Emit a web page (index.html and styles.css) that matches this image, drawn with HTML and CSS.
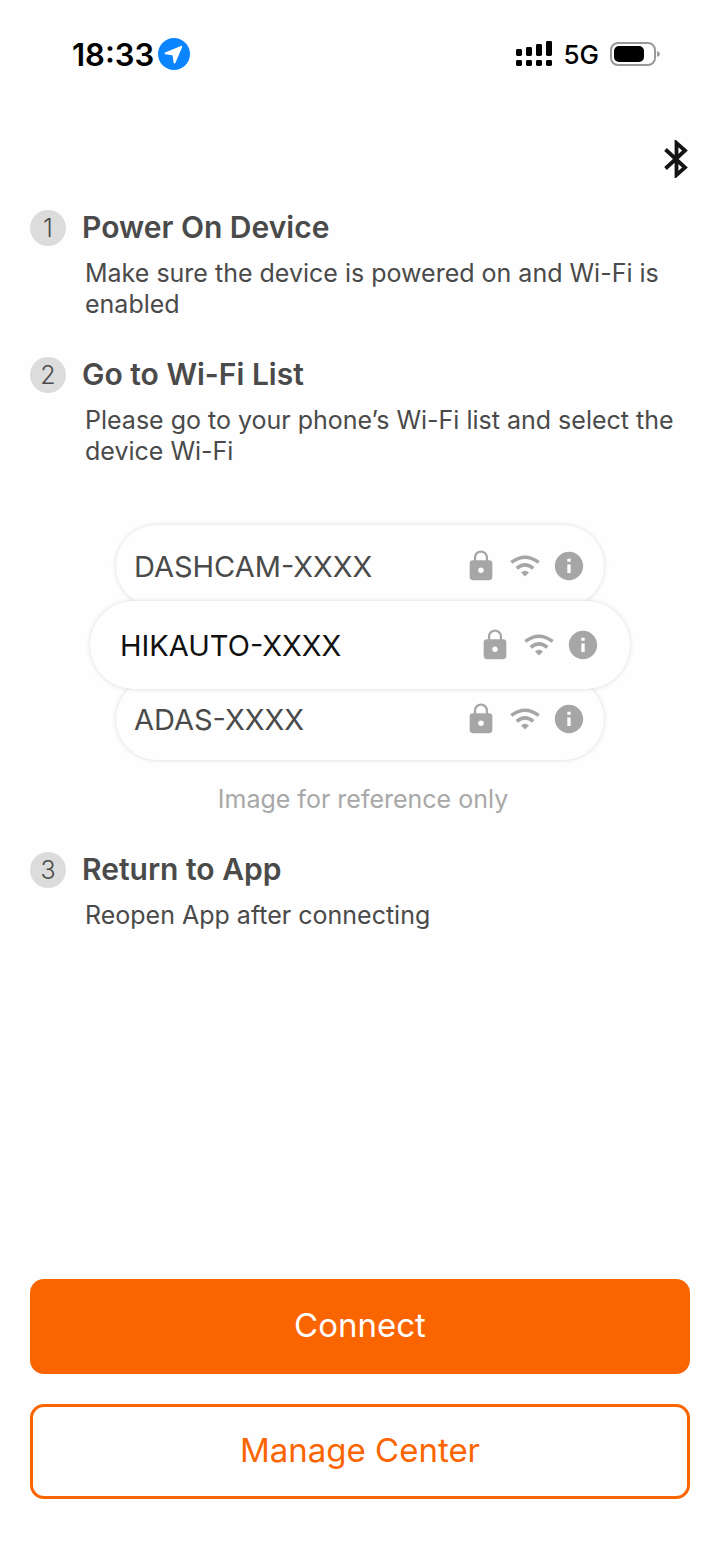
FILE: index.html
```
<!DOCTYPE html>
<html lang="en">
<head>
    <meta charset="UTF-8">
    <meta name="viewport" content="width=device-width, initial-scale=1.0">
    <title>Connect Device</title>
    <link rel="stylesheet" href="styles.css">
</head>
<body>
    <svg class="symbols" aria-hidden="true">
        <symbol id="lock" viewBox="0 0 24 24">
            <path d="M18 8h-1V6c0-2.76-2.24-5-5-5S7 3.24 7 6v2H6c-1.1 0-2 .9-2 2v10c0 1.1.9 2 2 2h12c1.1 0 2-.9 2-2V10c0-1.1-.9-2-2-2zm-6 9c-1.1 0-2-.9-2-2s.9-2 2-2 2 .9 2 2-.9 2-2 2zm3.4-9H8.6V6c0-1.88 1.52-3.4 3.4-3.4s3.4 1.52 3.4 3.4v2z"/>
        </symbol>
        <symbol id="wifi" viewBox="0 0 34 34">
            <path d="M3.3 13.4Q17 3 30.7 13.4M8.7 19.4Q17 12.4 25.3 19.4" fill="none" stroke="currentColor" stroke-width="3.5"/>
            <path d="M13 23.4Q17 20 21 23.4L17 27.6z"/>
        </symbol>
        <symbol id="info" viewBox="0 0 24 24">
            <path d="M12 2C6.48 2 2 6.48 2 12s4.48 10 10 10 10-4.48 10-10S17.52 2 12 2zm1.2 15h-2.4v-6h2.4v6zm0-8h-2.4V6.8h2.4V9z"/>
        </symbol>
    </svg>

    <div id="wrap">
        <div class="status">
            <div class="left">
                <span class="time">18:33</span>
                <svg class="location" viewBox="0 0 32 32">
                    <circle cx="16" cy="16" r="16" fill="#0a84ff"/>
                    <path d="M23.2 8.8L7.6 15.3l7.8 1.3 1.2 7.8z" fill="#fff" stroke="#fff" stroke-width="2" stroke-linejoin="round"/>
                </svg>
            </div>
            <div class="right">
                <svg class="signal" viewBox="0 0 36 26">
                    <rect x="0" y="8" width="6" height="7" rx="1.4"/>
                    <rect x="10" y="6" width="6" height="9" rx="1.4"/>
                    <rect x="20" y="3" width="6" height="12" rx="1.4"/>
                    <rect x="30" y="0" width="6" height="15" rx="1.4"/>
                    <rect x="0" y="19" width="6" height="6" rx="1.4"/>
                    <rect x="10" y="19" width="6" height="6" rx="1.4"/>
                    <rect x="20" y="19" width="6" height="6" rx="1.4"/>
                    <rect x="30" y="19" width="6" height="6" rx="1.4"/>
                </svg>
                <span class="network">5G</span>
                <svg class="battery" viewBox="0 0 50 24">
                    <rect x="1" y="1" width="44" height="22" rx="7" fill="none" stroke="#999" stroke-width="2"/>
                    <rect x="4" y="4" width="30" height="16" rx="5"/>
                    <path d="M47 9q3 1 3 3t-3 3z" fill="#999"/>
                </svg>
            </div>
        </div>

        <header>
            <button class="bluetooth" aria-label="Bluetooth">
                <svg viewBox="0 0 24 38">
                    <path d="M1.5 9.5L21 27.5L12.5 35V3L21 10.5L1.5 28.5" fill="none" stroke="#141414" stroke-width="3.8"/>
                </svg>
            </button>
        </header>

        <main>
            <section>
                <div class="title">
                    <span class="num">1</span>
                    <h2>Power On Device</h2>
                </div>
                <p>Make sure the device is powered on and Wi-Fi is enabled</p>
            </section>

            <section>
                <div class="title">
                    <span class="num">2</span>
                    <h2>Go to Wi-Fi List</h2>
                </div>
                <p>Please go to your phone’s Wi-Fi list and select the device Wi-Fi</p>
                <ul class="list">
                    <li>
                        <span>DASHCAM-XXXX</span>
                        <svg><use href="#lock"/></svg>
                        <svg><use href="#wifi"/></svg>
                        <svg><use href="#info"/></svg>
                    </li>
                    <li class="on">
                        <span>HIKAUTO-XXXX</span>
                        <svg><use href="#lock"/></svg>
                        <svg><use href="#wifi"/></svg>
                        <svg><use href="#info"/></svg>
                    </li>
                    <li>
                        <span>ADAS-XXXX</span>
                        <svg><use href="#lock"/></svg>
                        <svg><use href="#wifi"/></svg>
                        <svg><use href="#info"/></svg>
                    </li>
                </ul>
                <div class="note">Image for reference only</div>
            </section>

            <section>
                <div class="title">
                    <span class="num">3</span>
                    <h2>Return to App</h2>
                </div>
                <p>Reopen App after connecting</p>
            </section>
        </main>

        <footer>
            <button class="btn connect">Connect</button>
            <button class="btn manage">Manage Center</button>
        </footer>
    </div>
</body>
</html>
```
FILE: styles.css
```
*{margin:0; padding:0; box-sizing:border-box;}
body{
    font-family: Inter, "Liberation Sans", sans-serif;
    background:#fefefe;
    color:#4a4a4a;
}
li{
    list-style: none;
}
button{
    font-family: inherit;
    border:0;
    background:none;
    cursor: pointer;
}
.symbols{display:none;}
#wrap{
    display:flex;
    flex-direction: column;
    min-height:100vh;
    padding:0 30px 59px;
}

.status{
    display:flex;
    justify-content: space-between;
    align-items: center;
    height:108px;
    padding:0 30px 0 42px;
    color:#000;
}
.left, .right{display:flex; align-items: center;}
.left{gap:4px;}
.right{gap:11px;}
.time{font-size:31px; font-weight:600;}
.location{width:32px; height:32px;}
.signal{width:36px; height:26px;}
.network{font-size:26px; font-weight:500;}
.battery{width:50px; height:24px;}

header{
    display:flex;
    justify-content: flex-end;
    padding:32px 2px;
}
.bluetooth svg{display:block; width:24px; height:38px;}

main{
    display:flex;
    flex-direction: column;
    gap:37px;
}
.title{display:flex; align-items: center; gap:16px; height:36px;}
.num{
    width:36px;
    height:36px;
    border-radius: 50%;
    background:#dcdcdc;
    font-size:25px;
    font-weight:300;
    line-height:36px;
    text-align: center;
}
h2{font-size:30px; line-height:34px; font-weight:600; padding-bottom:2px;}
section p{
    margin:12px 0 0 55px;
    font-size:25px;
    line-height:31px;
}

.list{margin-top:58px; padding:0 60px;}
.list li{
    display:flex;
    align-items: center;
    gap:10px;
    height:82px;
    margin:0 26px;
    padding:0 18px;
    border-radius: 41px;
    background:#fefefe;
    box-shadow:0 0 5px rgba(0,0,0,.14);
    font-size:29px;
}
.list span{flex:1;}
.list svg{width:34px; height:34px; color:#a6a6a6; fill:#a6a6a6;}
.list .on{
    position: relative;
    height:88px;
    margin:-6px 0 -11px;
    padding:0 30px;
    border-radius: 44px;
    color:#111;
}
.note{
    margin:24px 0 0 6px;
    font-size:25px;
    line-height:31px;
    text-align: center;
    color:#a8a8a8;
}

footer{
    display:flex;
    flex-direction: column;
    gap:30px;
    margin-top:auto;
}
.btn{
    height:95px;
    padding-bottom:4px;
    border-radius: 14px;
    font-size:33px;
}
.connect{background:#fb6500; color:#fff;}
.manage{border:3px solid #fb6500; color:#fb6500;}
```
